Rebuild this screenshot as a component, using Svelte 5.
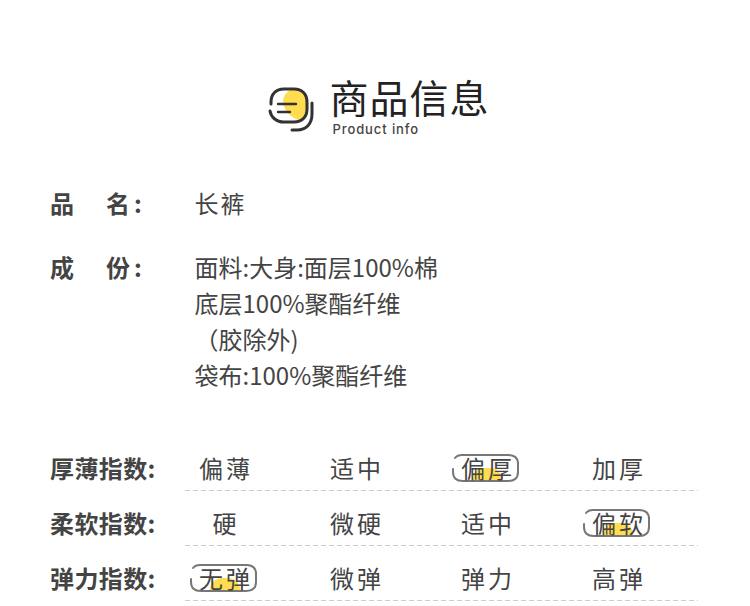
<script>
	const specs = [
		{ label: '品\u3000名:', lines: ['长裤'], spaced: true },
		{ label: '成\u3000份:', lines: ['面料:大身:面层100%棉', '底层100%聚酯纤维', '（胶除外)', '袋布:100%聚酯纤维'] }
	];

	// picked = index of the circled option
	const indexes = [
		{ label: '厚薄指数:', options: ['偏薄', '适中', '偏厚', '加厚'], picked: 2 },
		{ label: '柔软指数:', options: ['硬', '微硬', '适中', '偏软'], picked: 3 },
		{ label: '弹力指数:', options: ['无弹', '微弹', '弹力', '高弹'], picked: 0 }
	];
</script>

<section class="page">
	<header class="title">
		<svg class="logo" width="50" height="48" viewBox="0 0 50 48" fill="none">
			<path d="M25 5 C33 5 40 11 40 21 C40 29 38 34 35 37 C25 35 17 27 16 18 C16 12 20 7 25 5 Z" fill="#ffdc50" />
			<path d="M4 20 V18 C4 10 9 5 17 5 H27 C35 5 40 10 40 18 V25 C40 33 35 38 27 38 H17 C9 38 4 33 3 27" stroke="#333" stroke-width="3" stroke-linecap="round" />
			<path d="M45 19 V30 C45 40 39 46 30 46 H25" stroke="#333" stroke-width="3" stroke-linecap="round" />
			<path d="M11 20 H29 M11 28 H23" stroke="#333" stroke-width="2.4" stroke-linecap="round" />
		</svg>
		<div class="title-text">
			<h1>商品信息</h1>
			<p>Product info</p>
		</div>
	</header>

	<div class="specs">
		{#each specs as spec}
			<div class="spec">
				<div class="label">{spec.label}</div>
				<div class="value" class:spaced={spec.spaced}>
					{#each spec.lines as line}
						<div>{line}</div>
					{/each}
				</div>
			</div>
		{/each}
	</div>

	<div class="indexes">
		{#each indexes as row}
			<div class="index-row">
				<div class="index-label">{row.label}</div>
				<div class="options">
					{#each row.options as opt, i}
						<div class="option">
							<span class="word">
								{#if row.picked === i}
									<i class="blob"></i>
									<svg class="ring" width="67" height="29" viewBox="0 0 67 29" fill="none">
										<path d="M1 15 V18 C1 24 5 27 11 27 H56 C62 27 66 24 66 18 V10 C66 4 62 1 56 1 H10 C7 1 4.5 2 3 4" stroke="#777" stroke-width="2" stroke-linecap="round" />
									</svg>
								{/if}
								<span class="txt">{opt}</span>
							</span>
						</div>
					{/each}
				</div>
			</div>
		{/each}
	</div>
</section>

<style>
	:global(body) {
		background: #fff;
	}

	.page {
		width: 750px;
		height: 606px;
		overflow: hidden;
		box-sizing: border-box;
		padding: 67px 52px 0 50px;
		font-family: 'Noto Sans CJK SC', 'Noto Sans', sans-serif;
		color: #444;
	}

	.title {
		display: flex;
		justify-content: center;
		align-items: flex-start;
		gap: 12px;
		height: 118px;
		padding-left: 9px;
	}

	.logo {
		flex: none;
		margin-top: 17px;
	}

	h1 {
		margin: 5px 0 0;
		font-size: 39px;
		font-weight: 400;
		line-height: 48px;
		letter-spacing: 1px;
		color: #222;
	}

	.title-text p {
		margin: 1px 0 0 3px;
		font-family: 'Inter', sans-serif;
		font-size: 13px;
		font-weight: 500;
		line-height: 16px;
		letter-spacing: 0.9px;
		color: #444;
	}

	.spec {
		display: flex;
		margin-bottom: 28px;
	}

	.label {
		flex: none;
		width: 145px;
		font-size: 24px;
		font-weight: 700;
		line-height: 36px;
		letter-spacing: 4px;
		white-space: pre;
	}

	.value {
		margin-left: -0.5px;
		font-size: 24px;
		line-height: 36px;
	}

	.value.spaced {
		letter-spacing: 2px;
	}

	.indexes {
		margin-top: 43px;
	}

	.index-row {
		display: flex;
		height: 55px;
	}

	.index-label {
		flex: none;
		width: 135px;
		padding-top: 11px;
		font-size: 24px;
		font-weight: 700;
		line-height: 42px;
		letter-spacing: 0.4px;
	}

	.options {
		flex: none;
		box-sizing: border-box;
		width: 513px;
		display: grid;
		grid-template-columns: repeat(4, 125px);
		column-gap: 6px;
		padding-left: 14px;
		/* dashes are longer than a dashed border gives */
		background: repeating-linear-gradient(to right, #ccc 0 5px, transparent 5px 8px) bottom / 100% 1px no-repeat;
	}

	.option {
		display: flex;
		align-items: center;
		padding-top: 10px;
		padding-bottom: 1px;
	}

	.word {
		position: relative;
		min-width: 54px;
		font-size: 24px;
		line-height: 30px;
		letter-spacing: 3px;
		text-align: center;
	}

	.txt {
		position: relative;
	}

	.ring {
		position: absolute;
		left: -9px;
		top: 1px;
	}

	.blob {
		position: absolute;
		left: 11px;
		bottom: 1px;
		width: 30px;
		height: 14px;
		border-radius: 12px 12px 0 0;
		background: #ffdc50;
	}
</style>
